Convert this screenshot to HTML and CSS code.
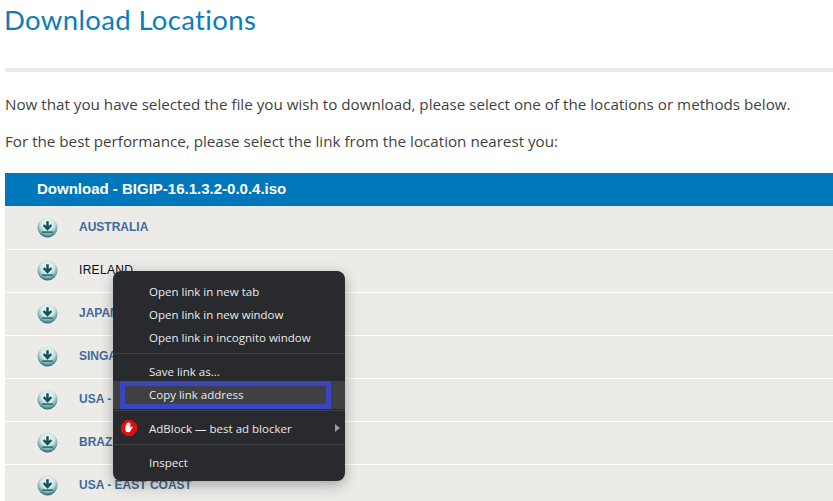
FILE: index.html
```html
<!DOCTYPE html>
<html lang="en">
<head>
<meta charset="utf-8">
<title>Download Locations</title>
<link rel="stylesheet" href="styles.css">
</head>
<body>
<svg class="defs" width="0" height="0" aria-hidden="true">
  <defs>
    <radialGradient id="orb" cx="50%" cy="32%" r="68%">
      <stop offset="0" stop-color="#f6fcfb"/>
      <stop offset="0.5" stop-color="#cfe5e4"/>
      <stop offset="0.8" stop-color="#6fa6a8"/>
      <stop offset="1" stop-color="#1f5f65"/>
    </radialGradient>
    <symbol id="dl" viewBox="0 0 22 22">
      <circle cx="11" cy="11" r="10.500" fill="url(#orb)"/>
      <path d="M11 4.500v7.500M7 8.400 11 12.600l4-4.200" fill="none" stroke="#0f5257" stroke-width="2.600"/>
      <path d="M5.500 15.800h11" stroke="#14575c" stroke-width="1.400"/>
    </symbol>
  </defs>
</svg>
<main class="page">
  <h1 class="title">Download Locations</h1>
  <hr class="rule">
  <p class="intro first">Now that you have selected the file you wish to download, please select one of the locations or methods below.</p>
  <p class="intro second">For the best performance, please select the link from the location nearest you:</p>
  <section class="table">
    <h2 class="table-head">Download - BIGIP-16.1.3.2-0.0.4.iso</h2>
    <ul class="rows">
      <li class="row"><svg class="icon"><use href="#dl"/></svg><a class="loc">AUSTRALIA</a></li>
      <li class="row"><svg class="icon"><use href="#dl"/></svg><a class="loc hover">IRELAND</a></li>
      <li class="row"><svg class="icon"><use href="#dl"/></svg><a class="loc">JAPAN</a></li>
      <li class="row"><svg class="icon"><use href="#dl"/></svg><a class="loc">SINGAPORE</a></li>
      <li class="row"><svg class="icon"><use href="#dl"/></svg><a class="loc">USA - WEST COAST</a></li>
      <li class="row"><svg class="icon"><use href="#dl"/></svg><a class="loc">BRAZIL</a></li>
      <li class="row"><svg class="icon"><use href="#dl"/></svg><a class="loc">USA - EAST COAST</a></li>
    </ul>
  </section>
</main>
<div class="menu">
  <div class="item">Open link in new tab</div>
  <div class="item">Open link in new window</div>
  <div class="item">Open link in incognito window</div>
  <div class="sep"></div>
  <div class="item">Save link as...</div>
  <div class="item active">Copy link address</div>
  <div class="sep"></div>
  <div class="item ext">
    <svg class="adblock" viewBox="0 0 16 16"><path d="M5 0h6l5 5v6l-5 5H5l-5-5V5z" fill="#e40d0d"/><path d="M4.500 8.500V5.500c0-.9 1.200-.9 1.200 0V3.500c0-.9 1.200-.9 1.200 0V3c0-.9 1.200-.9 1.200 0v.5c0-.9 1.200-.9 1.200 0v4.200l.9-1c.7-.7 1.700 0 1.200.8l-1.900 3.400c-.5.900-1.300 1.300-2.400 1.300-1.900 0-3.100-1.500-3.100-3.700z" fill="#fff"/></svg>
    <span>AdBlock — best ad blocker</span>
    <svg class="arrow" viewBox="0 0 5 8"><path d="M0 0l5 4-5 4z" fill="#9a9b9e"/></svg>
  </div>
  <div class="sep"></div>
  <div class="item">Inspect</div>
</div>
</body>
</html>
```
FILE: styles.css
```css
html, body {
  margin: 0;
  height: 501px;
  overflow: hidden;
  background: #fff;
}
body {
  position: relative;
  font-family: "Open Sans", "Liberation Sans", sans-serif;
}
.defs { position: absolute; }
.page { padding-left: 5px; }
.title {
  margin: 0 0 0 -1px;
  padding-top: 4px;
  height: 62px;
  box-sizing: border-box;
  font-family: Lato, sans-serif;
  font-weight: 400;
  font-size: 27.500px;
  line-height: 32px;
  letter-spacing: 0.35px;
  color: #0a7dbb;
}
.rule {
  margin: 0;
  border: 0;
  height: 4px;
  background: #e9e9e9;
  margin-top: 6px;
}
.intro {
  margin: 0;
  font-size: 15.200px;
  line-height: 20px;
  color: #3f3f3f;
  white-space: nowrap;
}
.first { padding-top: 22px; }
.second { padding-top: 17px; }
.table { margin-top: 22px; }
.table-head {
  margin: 0;
  height: 33px;
  padding-left: 32px;
  background: #0077bb;
  color: #fff;
  font-family: "Liberation Sans", sans-serif;
  font-size: 15px;
  font-weight: 700;
  line-height: 32px;
}
.rows {
  margin: 0;
  padding: 1px 0 0;
  list-style: none;
  background: #ecebe8;
}
.row {
  display: flex;
  align-items: center;
  height: 42px;
  border-bottom: 1px solid #fff;
  background: #ecebe8;
  padding-left: 32px;
  box-sizing: content-box;
}
.icon { width: 21px; height: 21px; margin-top: -2px; flex: none; }
.loc {
  margin-left: 21px;
  margin-top: -3px;
  font-family: "Liberation Sans", sans-serif;
  font-size: 12px;
  font-weight: 700;
  color: #3f6a9c;
}
.loc.hover { color: #0b0b14; font-weight: 400; letter-spacing: 0.3px; }
.menu {
  position: absolute;
  left: 113px;
  top: 271px;
  width: 232px;
  height: 210px;
  box-sizing: border-box;
  padding-top: 9px;
  background: #292a2d;
  border-radius: 8px;
  box-shadow: 0 4px 14px rgba(0, 0, 0, 0.3);
  color: #e8eaed;
  font-family: "Open Sans", sans-serif;
  font-size: 11.500px;
}
.item {
  display: flex;
  align-items: center;
  height: 23px;
  padding-left: 36px;
  position: relative;
  white-space: nowrap;
}
.sep { height: 1px; background: #3f4042; margin: 4px 0 6px; }
.item.active {
  background: #3f4042;
  box-sizing: border-box;
  height: 28px;
  margin-top: -2px;
  padding-bottom: 2px;
}
.item.active::after {
  content: "";
  position: absolute;
  left: 7px;
  right: 14px;
  top: 0;
  bottom: 0;
  border: 5px solid #3b45c0;
}
.item.active + .sep { margin-top: 1px; margin-bottom: 5px; }
.ext { height: 24px; }
.adblock {
  position: absolute;
  left: 8px;
  top: 4px;
  width: 16px;
  height: 16px;
}
.arrow {
  position: absolute;
  right: 5px;
  top: 8px;
  width: 5px;
  height: 8px;
}
```
